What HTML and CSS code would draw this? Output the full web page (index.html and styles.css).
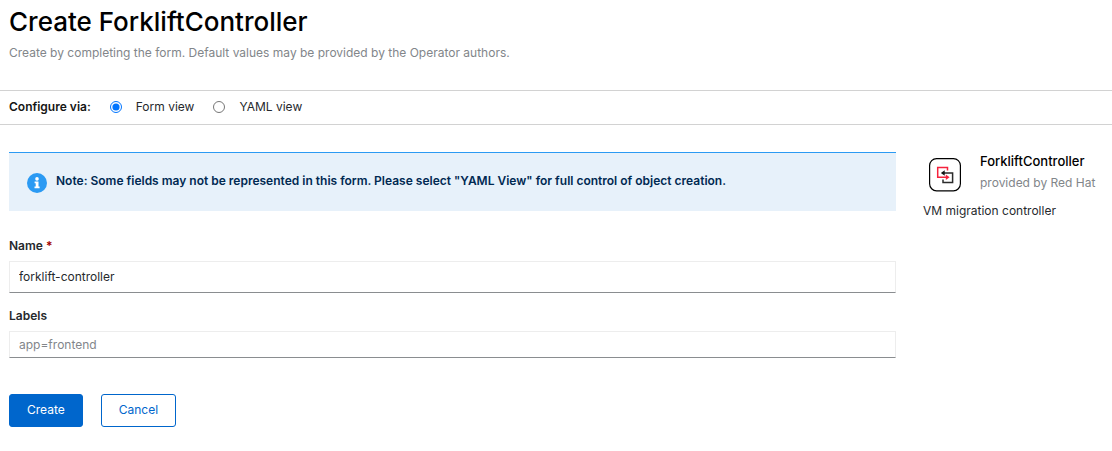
FILE: index.html
```
<!DOCTYPE html>
<html lang="en">
<head>
<meta charset="utf-8">
<meta name="viewport" content="width=device-width, initial-scale=1">
<title>Create ForkliftController</title>
<link rel="stylesheet" href="styles.css">
</head>
<body>
<header class="page-header">
  <h1 class="page-title">Create ForkliftController</h1>
  <p class="page-subtitle">Create by completing the form. Default values may be provided by the Operator authors.</p>
</header>
<div class="view-switch" role="radiogroup" aria-labelledby="view-label">
  <span class="view-label" id="view-label">Configure via:</span>
  <label class="view-option"><input class="radio" type="radio" name="view" checked><span>Form view</span></label>
  <label class="view-option"><input class="radio" type="radio" name="view"><span>YAML view</span></label>
</div>
<main class="content">
  <form class="form">
    <div class="alert">
      <svg class="alert-icon" viewBox="0 0 20 20" aria-hidden="true">
        <circle cx="10" cy="10" r="10" fill="#2b9af3"/>
        <circle cx="10" cy="5.9" r="1.8" fill="#fff"/>
        <path d="M7.6 8.6h3.9v4.9h1.1v1.7H7.5v-1.7h1.2v-3.2H7.6z" fill="#fff"/>
      </svg>
      <p class="alert-text">Note: Some fields may not be represented in this form. Please select "YAML View" for full control of object creation.</p>
    </div>
    <div class="field">
      <label class="field-label" for="name">Name <span class="required">*</span></label>
      <input class="text-input" id="name" type="text" value="forklift-controller" required>
    </div>
    <div class="field">
      <label class="field-label" for="labels">Labels</label>
      <input class="text-input compact" id="labels" type="text" placeholder="app=frontend">
    </div>
    <div class="actions">
      <button class="button primary" type="submit">Create</button>
      <button class="button secondary" type="button">Cancel</button>
    </div>
  </form>
  <aside class="summary">
    <div class="summary-head">
      <svg class="logo" viewBox="0 0 32 34" aria-hidden="true">
        <rect x=".6" y=".6" width="30.8" height="32.2" rx="7" fill="#fff" stroke="#000" stroke-width="1.2"/>
        <g fill="none" stroke-width="1.5">
          <path d="M18.5 12.6V9.4H8.7v9.8h9.2" stroke="#f5223c"/>
          <path d="M14 15h9.6v9.4H14v-3" stroke="#2b2b2b"/>
        </g>
        <path d="M16.8 16.4l3.8 2.8-3.8 2.8z" fill="#f5223c"/>
        <path d="M15.7 12.2L11.9 15l3.8 2.8z" fill="#111"/>
      </svg>
      <div>
        <h2 class="summary-title">ForkliftController</h2>
        <p class="summary-provider">provided by Red Hat</p>
      </div>
    </div>
    <p class="summary-text">VM migration controller</p>
  </aside>
</main>
</body>
</html>
```
FILE: styles.css
```
* { box-sizing: border-box; }
body {
  margin: 0;
  background: #fff;
  color: #26292d;
  font: 12px/18px Inter, sans-serif;
}
h1, h2, p { margin: 0; }
.page-header { padding: 5px 9px 28px; }
.page-title {
  color: #000;
  font-size: 26px;
  font-weight: 500;
  line-height: 34px;
}
.page-subtitle { margin-top: 5px; color: #82868a; }
.view-switch {
  display: flex;
  align-items: center;
  gap: 19px;
  padding: 7px 9px 8px;
  border: 1px solid #d2d2d2;
  border-width: 1px 0;
}
.view-label, .field-label, .alert-text { font-weight: 600; }
.view-label { color: #151515; }
.view-option { display: flex; align-items: center; gap: 14px; }
.radio { width: 12px; height: 12px; margin: 0; accent-color: #0075ff; }
.content {
  display: grid;
  grid-template-columns: minmax(0, 1fr) 180px;
  gap: 27px;
  padding: 27px 9px 24px;
}
.alert {
  display: flex;
  gap: 9px;
  margin-bottom: 26px;
  padding: 19px 18px 18px;
  border-top: 1px solid #2b9af3;
  background: #e7f1fa;
  color: #002952;
}
.alert-icon { flex: none; width: 20px; height: 20px; margin-top: 1px; }
.field { margin-bottom: 14px; }
.field-label { display: block; margin-bottom: 6px; color: #26292d; }
.required { color: #a30000; }
.text-input {
  display: block;
  width: 100%;
  height: 32px;
  padding: 0 9px 2px;
  border: 1px solid #ededed;
  border-bottom-color: #8a8d90;
  border-radius: 0;
  background: #fff;
  color: #26292d;
  font: inherit;
}
.compact { height: 27px; padding-bottom: 0; }
.text-input::placeholder { color: #82868a; opacity: 1; }
.actions { display: flex; gap: 18px; margin-top: 36px; }
.button {
  padding: 7px 17px 8px;
  border: 1px solid #06c;
  border-radius: 3px;
  font: inherit;
  line-height: 16px;
}
.primary { background: #06c; color: #fff; }
.secondary { background: #fff; color: #06c; }
.summary-head { display: flex; gap: 19px; padding-left: 6px; }
.logo { flex: none; width: 32px; height: 34px; margin-top: 6px; }
.summary-title { color: #000; font-size: 13px; font-weight: 500; line-height: 18px; }
.summary-provider { margin-top: 4px; color: #82868a; }
.summary-text { margin-top: 10px; }
```
